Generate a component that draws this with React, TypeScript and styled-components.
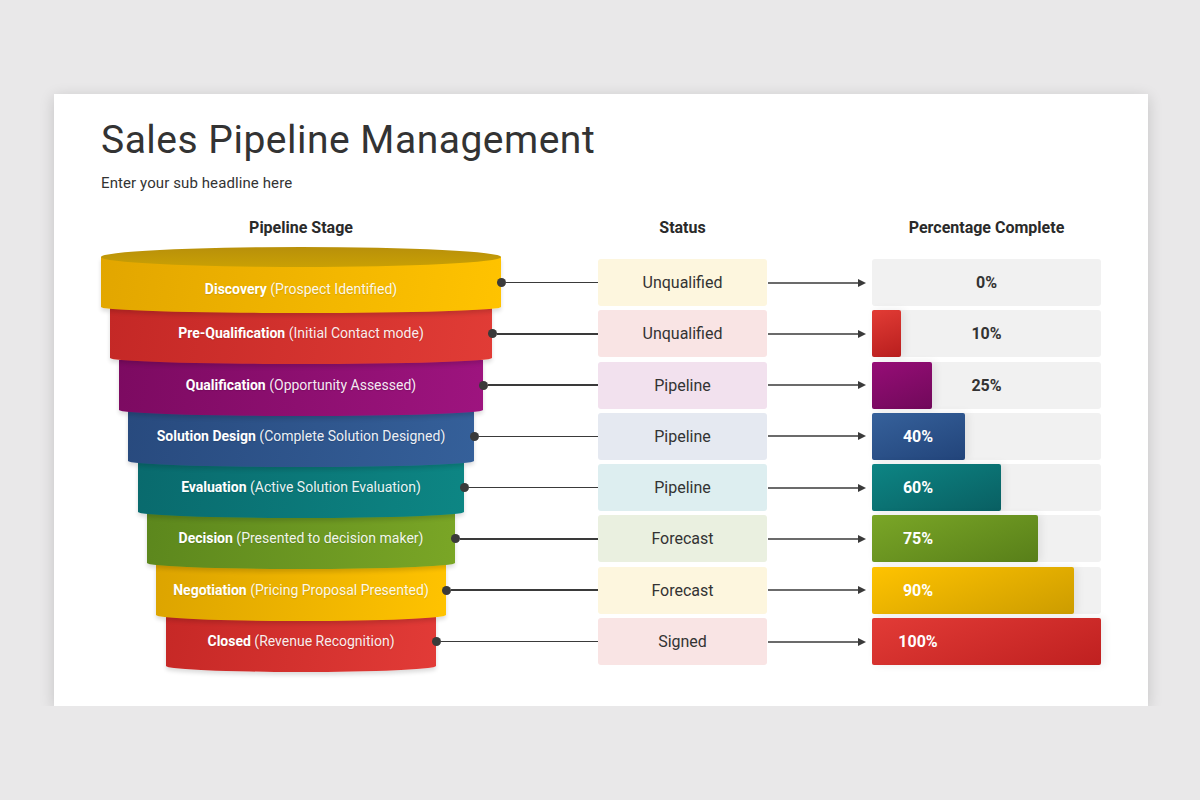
import React from "react";
import styled, { createGlobalStyle, css } from "styled-components";

const Global = createGlobalStyle`
  html, body { margin: 0; padding: 0; }
  body {
    background: #e9e8e9;
    font-family: Roboto, "Liberation Sans", Arial, sans-serif;
    color: #333;
  }
`;

const Card = styled.div`
  box-sizing: border-box;
  width: 1094px;
  height: 612px;
  margin: 94px 0 0 54px;
  background: #fff;
  box-shadow: 0 3px 14px rgba(0, 0, 0, 0.16);
  padding: 24px 0 0 47px;
`;

const Title = styled.h1`
  margin: 0;
  font-size: 39px;
  line-height: 45px;
  font-weight: 400;
  color: #333;
  letter-spacing: 0.5px;
`;

const Subtitle = styled.p`
  margin: 10px 0 0;
  font-size: 15px;
  line-height: 20px;
  color: #333;
  letter-spacing: 0.1px;
`;

const GridLine = styled.div`
  display: grid;
  grid-template-columns: 400px 97px 169px 105px 229px;
`;

const Headers = styled(GridLine)`
  margin-top: 25px;
  height: 20px;
`;

const Header = styled.div<{ $col: number }>`
  grid-column: ${(p) => p.$col};
  text-align: center;
  font-size: 16px;
  line-height: 20px;
  font-weight: 700;
  color: #2a2a2a;
`;

const Rows = styled.div`
  margin-top: 21px;
  display: flex;
  flex-direction: column;
  gap: 4.3px;
`;

const Row = styled(GridLine)`
  grid-template-rows: 47px;
`;

const FunnelCell = styled.div<{ $inset: number }>`
  grid-column: 1 / span 2;
  display: flex;
  align-items: flex-start;
  padding-left: ${(p) => p.$inset}px;
`;

const Segment = styled.div<{ $w: number; $from: string; $to: string; $z: number; $top?: boolean }>`
  position: relative;
  z-index: ${(p) => p.$z};
  box-sizing: border-box;
  flex: none;
  width: ${(p) => p.$w}px;
  height: 56px;
  margin-top: -2px;
  padding-bottom: 6px;
  display: flex;
  align-items: center;
  justify-content: center;
  background: linear-gradient(100deg, ${(p) => p.$from} 0%, ${(p) => p.$to} 100%);
  border-radius: 0 0 50% 50% / 0 0 6px 6px;
  box-shadow: 0 3px 4px rgba(0, 0, 0, 0.14);
  color: #fff;
  font-size: 14px;
  white-space: nowrap;
  text-shadow: 0 1px 1px rgba(0, 0, 0, 0.12);
  ${(p) =>
    p.$top &&
    css`
      padding-top: 13px;
      &::before {
        content: "";
        position: absolute;
        left: 0;
        right: 0;
        top: -10px;
        height: 20px;
        border-radius: 50%;
        background: linear-gradient(180deg, #b8900a 0%, #c9a004 100%);
      }
    `}
`;

const Strong = styled.b`
  font-weight: 700;
`;

const Soft = styled.span`
  color: rgba(255, 255, 255, 0.93);
`;

const Connector = styled.div`
  position: relative;
  z-index: 40;
  flex: 1;
  align-self: center;
  display: flex;
  align-items: center;
  margin-left: -4.5px;
`;

const Dot = styled.span`
  width: 9px;
  height: 9px;
  border-radius: 50%;
  background: #3a3a3a;
  flex: none;
`;

const Line = styled.span`
  flex: 1;
  height: 1.6px;
  background: #3a3a3a;
`;

const Status = styled.div<{ $bg: string }>`
  grid-column: 3;
  display: flex;
  align-items: center;
  justify-content: center;
  background: ${(p) => p.$bg};
  border-radius: 3px;
  font-size: 16px;
  color: #333;
`;

const ArrowCell = styled.div`
  grid-column: 4;
  display: flex;
  align-items: center;
`;

const Track = styled.div`
  grid-column: 5;
  display: grid;
  grid-template-columns: 1fr;
  grid-template-rows: 47px;
  background: #f1f1f1;
  border-radius: 3px;
`;

const Bar = styled.div<{ $from: string; $to: string }>`
  grid-area: 1 / 1;
  justify-self: start;
  height: 100%;
  border-radius: 2px;
  background: linear-gradient(160deg, ${(p) => p.$from} 0%, ${(p) => p.$to} 100%);
  box-shadow: 3px 0 8px rgba(0, 0, 0, 0.08);
`;

const Pct = styled.div<{ $light: boolean }>`
  grid-area: 1 / 1;
  align-self: center;
  position: relative;
  font-size: 16px;
  font-weight: 700;
  text-align: center;
  ${(p) =>
    p.$light
      ? css`
          justify-self: start;
          width: 92px;
          color: #fff;
        `
      : css`
          justify-self: stretch;
          color: #333;
        `}
`;

type Stage = {
  name: string;
  note: string;
  inset: number;
  from: string;
  to: string;
  status: string;
  statusBg: string;
  pct: number;
  fill: number;
  barFrom: string;
  barTo: string;
};

const stages: Stage[] = [
  { name: "Discovery", note: "(Prospect Identified)", inset: 0, from: "#e2a600", to: "#ffc300", status: "Unqualified", statusBg: "#fdf6de", pct: 0, fill: 0, barFrom: "#ffc300", barTo: "#d09e00" },
  { name: "Pre-Qualification", note: "(Initial Contact mode)", inset: 9, from: "#c42826", to: "#e13c36", status: "Unqualified", statusBg: "#f9e4e4", pct: 10, fill: 29, barFrom: "#e23c35", barTo: "#b81e1e" },
  { name: "Qualification", note: "(Opportunity Assessed)", inset: 18, from: "#7c0a61", to: "#9e147f", status: "Pipeline", statusBg: "#f2e1ee", pct: 25, fill: 60, barFrom: "#960d76", barTo: "#70095a" },
  { name: "Solution Design", note: "(Complete Solution Designed)", inset: 27, from: "#284a7e", to: "#35609a", status: "Pipeline", statusBg: "#e5e9f1", pct: 40, fill: 93, barFrom: "#36619b", barTo: "#22447a" },
  { name: "Evaluation", note: "(Active Solution Evaluation)", inset: 37, from: "#096a6d", to: "#0d8684", status: "Pipeline", statusBg: "#ddeef0", pct: 60, fill: 129, barFrom: "#0d8584", barTo: "#095f62" },
  { name: "Decision", note: "(Presented to decision maker)", inset: 46, from: "#5c871d", to: "#7aa626", status: "Forecast", statusBg: "#eaf0e0", pct: 75, fill: 166, barFrom: "#7aa627", barTo: "#587f19" },
  { name: "Negotiation", note: "(Pricing Proposal Presented)", inset: 55, from: "#dca400", to: "#ffc300", status: "Forecast", statusBg: "#fdf6de", pct: 90, fill: 202, barFrom: "#ffc300", barTo: "#cc9c00" },
  { name: "Closed", note: "(Revenue Recognition)", inset: 65, from: "#c62826", to: "#e23b37", status: "Signed", statusBg: "#f9e4e4", pct: 100, fill: 229, barFrom: "#e23b36", barTo: "#bf2020" },
];

const Arrow = () => (
  <svg width="105" height="12" viewBox="0 0 105 12">
    <line x1="1" y1="6" x2="92" y2="6" stroke="#3a3a3a" strokeWidth="1.6" />
    <polygon points="91,2 99,6 91,10" fill="#3a3a3a" />
  </svg>
);

export default function App() {
  return (
    <>
      <Global />
      <Card>
        <Title>Sales Pipeline Management</Title>
        <Subtitle>Enter your sub headline here</Subtitle>
        <Headers>
          <Header $col={1}>Pipeline Stage</Header>
          <Header $col={3}>Status</Header>
          <Header $col={5}>Percentage Complete</Header>
        </Headers>
        <Rows>
          {stages.map((s, i) => (
            <Row key={s.name}>
              <FunnelCell $inset={s.inset}>
                <Segment $w={400 - 2 * s.inset} $from={s.from} $to={s.to} $z={20 - i} $top={i === 0}>
                  <Strong>{s.name}</Strong>
                  &nbsp;<Soft>{s.note}</Soft>
                </Segment>
                <Connector>
                  <Dot />
                  <Line />
                </Connector>
              </FunnelCell>
              <Status $bg={s.statusBg}>{s.status}</Status>
              <ArrowCell>
                <Arrow />
              </ArrowCell>
              <Track>
                {s.fill > 0 && <Bar $from={s.barFrom} $to={s.barTo} style={{ width: s.fill }} />}
                <Pct $light={s.pct >= 40}>{s.pct}%</Pct>
              </Track>
            </Row>
          ))}
        </Rows>
      </Card>
    </>
  );
}
